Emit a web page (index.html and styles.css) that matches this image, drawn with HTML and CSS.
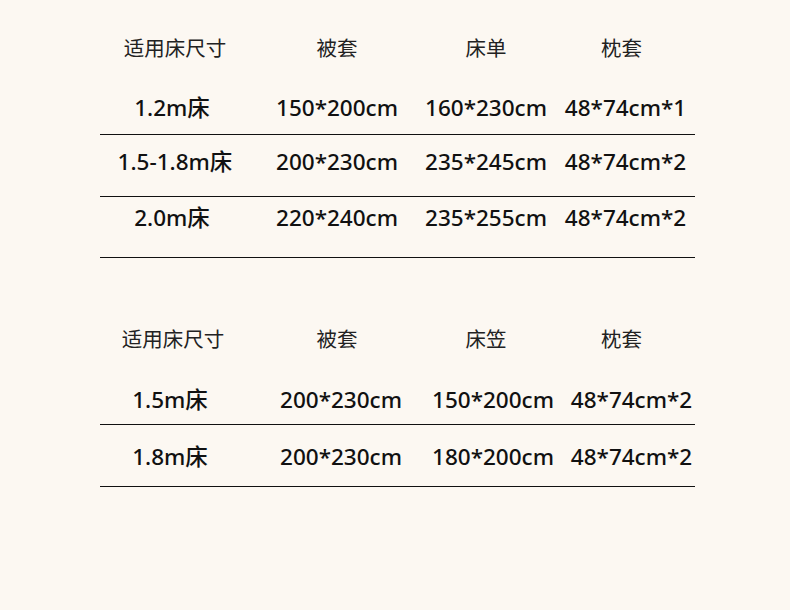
FILE: index.html
```html
<!DOCTYPE html>
<html lang="zh">
<head>
<meta charset="utf-8">
<link rel="stylesheet" href="styles.css">
</head>
<body>
<div class="page">
  <div class="table t1">
    <div class="row head">
      <div class="cell">适用床尺寸</div><div class="cell">被套</div><div class="cell">床单</div><div class="cell">枕套</div>
    </div>
    <div class="row data r1">
      <div class="cell c1 s1">1.2m床</div><div class="cell">150*200cm</div><div class="cell">160*230cm</div><div class="cell c4">48*74cm*1</div>
    </div>
    <div class="row data r2">
      <div class="cell">1.5-1.8m床</div><div class="cell">200*230cm</div><div class="cell">235*245cm</div><div class="cell c4">48*74cm*2</div>
    </div>
    <div class="row data r3">
      <div class="cell c1 s1">2.0m床</div><div class="cell">220*240cm</div><div class="cell">235*255cm</div><div class="cell c4">48*74cm*2</div>
    </div>
  </div>
  <div class="table t2">
    <div class="row head">
      <div class="cell h1">适用床尺寸</div><div class="cell">被套</div><div class="cell">床笠</div><div class="cell">枕套</div>
    </div>
    <div class="row data r4">
      <div class="cell s2">1.5m床</div><div class="cell d2">200*230cm</div><div class="cell d3">150*200cm</div><div class="cell d4">48*74cm*2</div>
    </div>
    <div class="row data r5">
      <div class="cell s2">1.8m床</div><div class="cell d2">200*230cm</div><div class="cell d3">180*200cm</div><div class="cell d4">48*74cm*2</div>
    </div>
  </div>
</div>
</body>
</html>
```

FILE: styles.css
```css
html, body {
  margin: 0;
  padding: 0;
  background: #fcf8f2;
}
.page {
  width: 790px;
  height: 610px;
  padding-top: 33px;
  box-sizing: border-box;
  font-family: "Noto Sans", "Noto Sans CJK SC", sans-serif;
  color: #111;
}
.table {
  margin-left: 100px;
  width: 595px;
}
.t2 {
  margin-top: 66px;
}
.row {
  display: grid;
  grid-template-columns: 150px 174px 124px 147px;
  align-items: start;
}
.cell {
  display: flex;
  justify-content: center;
  white-space: nowrap;
  line-height: 30px;
}
.head .cell {
  font-size: 20.5px;
  color: #222;
}
.data {
  border-bottom: 1px solid #111;
  font-size: 22.5px;
  font-weight: 500;
}
.r1 { padding-top: 30px; height: 41px; }
.r2 { padding-top: 12px; height: 49px; }
.r3 { padding-top: 6px; height: 54px; }
.r4 { padding-top: 31px; height: 39px; }
.r5 { padding-top: 17px; height: 44px; }
.c1 { padding-right: 6px; }
.c4 { padding-left: 8px; }
.h1 { padding-right: 4px; }
.s2 { padding-right: 10px; }
.d2 { padding-left: 8px; }
.d3 { padding-left: 14px; }
.d4 { padding-left: 20px; }
```
